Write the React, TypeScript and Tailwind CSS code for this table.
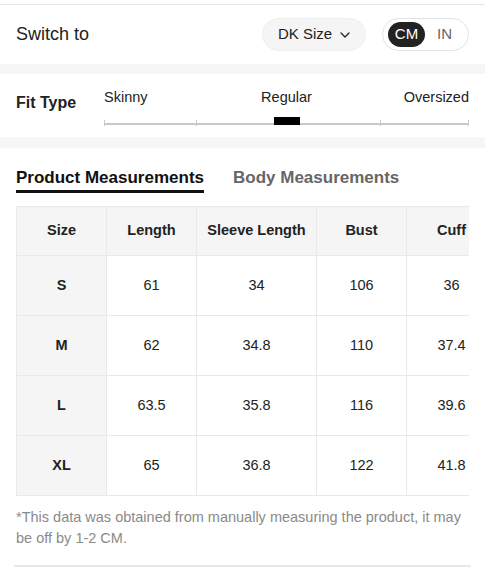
import React from "react";

const rows = [
  ["S", "61", "34", "106", "36"],
  ["M", "62", "34.8", "110", "37.4"],
  ["L", "63.5", "35.8", "116", "39.6"],
  ["XL", "65", "36.8", "122", "41.8"],
];
const headers = ["Size", "Length", "Sleeve Length", "Bust", "Cuff"];
const widths = ["w-[90px]", "w-[90px]", "w-[120px]", "w-[90px]", "w-[90px]"];

export default function App() {
  return (
    <div className="w-[485px] min-h-[575px] bg-white font-['Liberation_Sans',Arial,sans-serif] text-[#222]">
      <div className="h-[4px]" />
      {/* Switch to */}
      <div className="border-t border-[#e6e6e6] h-[60px] flex items-center justify-between pl-4 pr-4">
        <span className="text-[18px] text-[#222]">Switch to</span>
        <div className="flex items-center gap-4">
          <div className="h-[33px] w-[104px] rounded-full bg-[#f5f5f5] border border-[#efefef] flex items-center justify-center gap-2 text-[15px] text-[#222]">
            <span>DK Size</span>
            <svg width="10" height="6" viewBox="0 0 10 6" fill="none">
              <path d="M1 1l4 4 4-4" stroke="#222" strokeWidth="1.3" strokeLinecap="round" strokeLinejoin="round" />
            </svg>
          </div>
          <div className="h-[33px] w-[87px] rounded-full border border-[#e2e2e2] flex items-center pl-[5px] gap-[12px]">
            <span className="h-[25px] w-[37px] rounded-full bg-[#222] text-white text-[15px] flex items-center justify-center">CM</span>
            <span className="text-[15px] text-[#666]">IN</span>
          </div>
        </div>
      </div>
      <div className="h-[10px] bg-[#f6f6f6]" />
      {/* Fit type */}
      <div className="h-[63px] flex pl-4 pr-4">
        <span className="w-[88px] pt-[19px] text-[16px] leading-[20px] font-bold">Fit Type</span>
        <div className="flex-1 flex flex-col pt-[15px]">
          <div className="grid grid-cols-[1fr_auto_1fr] text-[14.5px] text-[#222] leading-[16px]">
            <span>Skinny</span>
            <span>Regular</span>
            <span className="text-right">Oversized</span>
          </div>
          <div className="relative h-[8px] mt-[12px]">
            <div className="absolute left-0 right-0 top-[6px] h-[2px] bg-[#c9c9c9]" />
            <div className="absolute left-0 top-[3px] w-[1px] h-[6px] bg-[#c9c9c9]" />
            <div className="absolute left-[92px] top-[3px] w-[1px] h-[6px] bg-[#c9c9c9]" />
            <div className="absolute left-[276px] top-[3px] w-[1px] h-[6px] bg-[#c9c9c9]" />
            <div className="absolute right-0 top-[3px] w-[1px] h-[6px] bg-[#c9c9c9]" />
            <div className="absolute left-[170px] top-0 w-[26px] h-[8px] bg-black" />
          </div>
        </div>
      </div>
      <div className="h-[11px] bg-[#f6f6f6]" />
      {/* Tabs */}
      <div className="pl-4 pr-4">
        <div className="flex items-start gap-[29px] pt-[20px] h-[58px]">
          <div className="flex flex-col">
            <span className="text-[17px] font-bold leading-[20px] text-[#111]">Product Measurements</span>
            <div className="mt-[2px] h-[3px] bg-[#111]" />
          </div>
          <span className="text-[17px] font-bold leading-[20px] text-[#666]">Body Measurements</span>
        </div>
        <div className="w-[453px] overflow-hidden">
          <table className="border-collapse table-fixed w-[480px]">
            <thead>
              <tr className="h-[49px] bg-[#f5f5f5]">
                {headers.map((h, i) => (
                  <th key={h} className={`${widths[i]} border border-[#e9e9e9] text-[14.5px] font-bold text-[#222] text-center`}>
                    {h}
                  </th>
                ))}
              </tr>
            </thead>
            <tbody>
              {rows.map((r) => (
                <tr key={r[0]} className="h-[60px]">
                  {r.map((c, i) => (
                    <td
                      key={i}
                      className={
                        i === 0
                          ? "border border-[#e9e9e9] bg-[#f5f5f5] text-[14.5px] font-bold text-center text-[#222]"
                          : "border border-[#e9e9e9] text-[14.5px] text-center text-[#222]"
                      }
                    >
                      {c}
                    </td>
                  ))}
                </tr>
              ))}
            </tbody>
          </table>
        </div>
        <p className="mt-[11px] text-[14.5px] leading-[21px] text-[#8a8a8a]">
          *This data was obtained from manually measuring the product, it may be off by 1-2 CM.
        </p>
      </div>
      <div className="mx-[14px] mt-[16px] h-[2px] bg-[#e8e8e8]" />
    </div>
  );
}
